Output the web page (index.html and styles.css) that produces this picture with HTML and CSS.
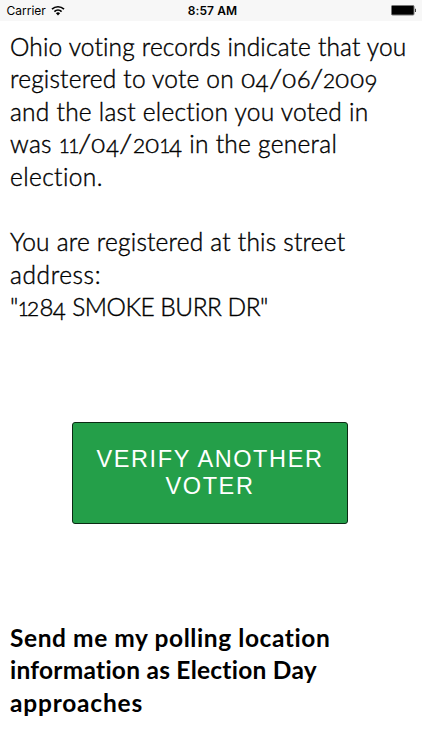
FILE: index.html
```
<!DOCTYPE html>
<html lang="en"><head><meta charset="utf-8"><title>Voter record</title><link rel="stylesheet" href="styles.css"></head>
<body>
<header class="status"><div class="carrier"><span class="carrier-name">Carrier</span><svg class="wifi" viewBox="0 0 14 11"><path d="M1 4.2a8.6 8.6 0 0 1 12 0M3.4 6.6a5.2 5.2 0 0 1 7.2 0" fill="none" stroke="#000" stroke-width="1.7"/><path d="M4.9 8.3a3 3 0 0 1 4.2 0L7 10.5z"/></svg></div><span class="time">8:57 AM</span><div class="power"><svg class="battery" viewBox="0 0 25 11"><rect x=".5" y=".5" width="22.5" height="9.5" rx="1" stroke="#777"/><path d="M24 3.7h1v3.2h-1z" fill="#444"/></svg></div></header>
<main>
<p class="record"><span class="line r1">Ohio voting records indicate that you</span><span class="line r2">registered to vote on <i class="zero">0</i><i class="low">4</i><i class="slash">/</i><i class="zero">0</i><i class="tall">6</i><i class="slash">/</i><i class="two">2</i><i class="zero">0</i><i class="zero">0</i><i class="low">9</i></span><span class="line r3">and the last election you voted in</span><span class="line r4">was <i class="one">1</i><i class="one">1</i><i class="slash">/</i><i class="zero">0</i><i class="low">4</i><i class="slash">/</i><i class="two">2</i><i class="zero">0</i><i class="one">1</i><i class="low">4</i> in the general</span><span class="line r5">election.</span></p>
<p class="record"><span class="line r6">You are registered at this street</span><span class="line r7">address:</span><span class="line r8">"<i class="one">1</i><i class="two">2</i><i class="tall">8</i><i class="low">4</i> SMOKE BURR DR"</span></p>
<button class="verify"><span>VERIFY ANOTHER</span><span>VOTER</span></button>
<h2 class="send"><span class="line h1">Send me my polling location</span><span class="line h2">information as Election Day</span><span class="line h3">approaches</span></h2>
</main>
</body></html>
```
FILE: styles.css
```
body{margin:0;background:#fff;color:#000;font-family:Lato,sans-serif;font-variant-ligatures:none}
.status{height:21px;background:#f7f7f7;display:grid;grid-template-columns:1fr auto 1fr;align-items:center;font:12px Inter,sans-serif}
.carrier{display:flex;align-items:center;gap:5px;padding-left:6.5px}
.wifi{width:14px;height:11px}
.time{font-weight:600;padding-left:3px;letter-spacing:.1px}
.power{display:flex;justify-content:flex-end;padding-right:6px}
.battery{width:25px;height:11px}
main{padding:9.5px 10px 0}
.record{margin:0 0 32.6px;font-size:24.5px;line-height:32.6px;font-weight:300;-webkit-text-stroke:.4px #000}
.line{display:block;height:32.6px;width:max-content;white-space:nowrap}
.r1{letter-spacing:.17px}
.r2{letter-spacing:.2px}
.r3{letter-spacing:.25px}
.r4{letter-spacing:.28px}
.r5{letter-spacing:.4px}
.r6{letter-spacing:.22px}
.r7{letter-spacing:.6px}
.r8{letter-spacing:-.5px}
/* Old-style figures */
i{display:inline-block;font-style:normal;line-height:1;text-align:center;letter-spacing:0}
.zero{width:14.5px;font-size:19px;transform:scaleX(1.25)}
.one{width:9.5px;font-size:19px}
.two{width:12.2px;font-size:19px;transform:scaleX(1.1)}
.low{width:13.5px;font-size:22.5px;transform:translateY(4px)}
.tall{width:13px;font-size:24px}
.slash{width:13.5px;transform:scaleX(1.25)}
.verify{display:flex;flex-direction:column;align-items:center;justify-content:center;width:276px;height:102px;padding:0;margin:98.5px 0 0 62px;border:1px solid #0b2b14;border-radius:3px;background:#249f49;color:#fff;font:23.5px/27px "Liberation Sans",sans-serif;letter-spacing:1.6px}
.send{margin:97.5px 0 0;font-size:24.5px;line-height:32.6px;font-weight:700;color:#000}
.h1{letter-spacing:.58px}
.h2{letter-spacing:.25px}
.h3{letter-spacing:.8px}
```
